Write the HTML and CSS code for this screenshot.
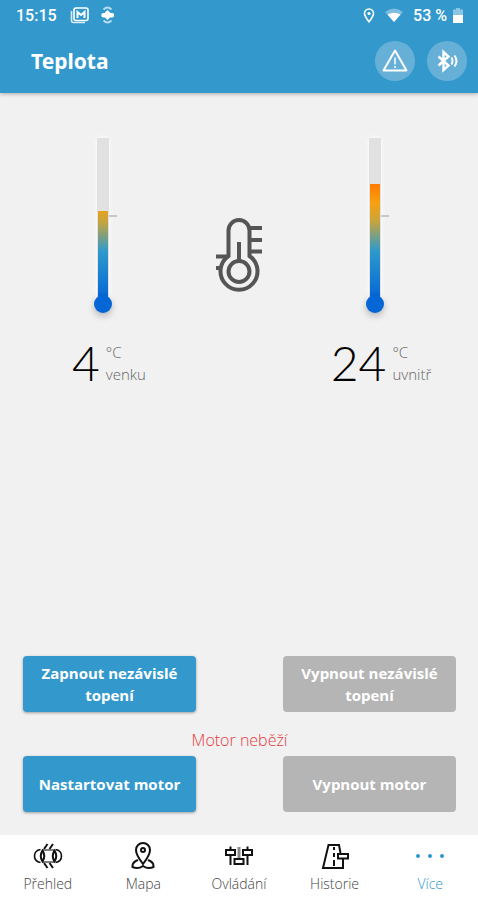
FILE: index.html
```html
<!DOCTYPE html>
<html lang="cs">
<head>
<meta charset="UTF-8">
<meta name="viewport" content="width=device-width, initial-scale=1.0">
<title>Teplota</title>
<link rel="stylesheet" href="styles.css">
</head>
<body>

<header class="header">
  <div class="status">
    <span class="clock">15:15</span>
    <svg class="status-mail" width="19" height="17" viewBox="0 0 19 17">
      <path d="M1.500 4v9.500q0 2 2 2H15" fill="none" stroke="#d9ecf7" stroke-width="1.600"/>
      <rect x="4" y="1" width="14" height="12.500" rx="2" fill="none" stroke="#fff" stroke-width="1.600"/>
      <path d="M7.500 11V5l3.500 3 3.500-3v6" fill="none" stroke="#fff" stroke-width="2"/>
    </svg>
    <svg class="status-sync" width="13" height="18" viewBox="0 0 13 18">
      <path d="M2.500 3.500Q6.500-.5 10.500 3.500M2.500 14.500Q6.500 18.500 10.500 14.500" fill="none" stroke="#b9dcf0" stroke-width="1.800"/>
      <path d="M6.500 4l3 3H11a2 2 0 0 1 0 4.500H9l-2.500 2.500L4 11.500H2.500A2 2 0 0 1 2.500 7h1z" fill="#fff"/>
    </svg>
    <span class="status-space"></span>
    <svg class="status-pin" width="12" height="15" viewBox="0 0 12 15">
      <path d="M6 13.800C3 10 1.500 8 1.500 5.500a4.500 4.500 0 0 1 9 0C10.500 8 9 10 6 13.800z" fill="none" stroke="#fff" stroke-width="1.600"/>
      <circle cx="6" cy="5.500" r="1.600" fill="#fff"/>
    </svg>
    <svg class="status-wifi" width="18" height="14" viewBox="0 0 18 14">
      <path d="M0 4Q9-3 18 4L9 14z" fill="#7dbde0"/>
      <path d="M2.500 6.500Q9 3 15.500 6.500L9 14z" fill="#fff"/>
    </svg>
    <span class="battery-text">53 %</span>
    <svg class="status-battery" width="10" height="15" viewBox="0 0 10 15">
      <path d="M3 0h4v1.500h3V7H0V1.500h3z" fill="#8cc5e4"/>
      <path d="M0 7h10v8H0z" fill="#fff"/>
    </svg>
  </div>
  <div class="title-bar">
    <h1>Teplota</h1>
    <button class="round" aria-label="Varování">
      <svg width="28" height="26" viewBox="0 0 28 26" fill="none" stroke="#fff">
        <path d="M14 2.500L25.500 22.500H2.500z" stroke-width="2" stroke-linejoin="round"/>
        <path d="M14 9.500v7M14 18v2" stroke-width="1.500"/>
      </svg>
    </button>
    <button class="round" aria-label="Bluetooth">
      <svg width="24" height="24" viewBox="0 0 24 24" fill="none" stroke="#fff">
        <path d="M3.500 7.500l10 9-5 4.500V3l5 4.500-10 9" stroke-width="2.400"/>
        <path d="M16.500 8.500q2 3.500 0 7M19.500 6.500q4 5.500 0 11" stroke-width="2"/>
      </svg>
    </button>
  </div>
</header>

<main class="content">
  <section class="gauges">
    <div class="gauge">
      <div class="thermo">
        <div class="tube"><div class="level" style="height:56%"></div></div>
        <div class="bulb"></div>
        <div class="tick"></div>
      </div>
      <div class="reading">
        <span class="value">4</span>
        <span class="unit">°C<br>venku</span>
      </div>
    </div>

    <svg class="thermo-icon" width="50" height="78" viewBox="0 0 50 78" fill="none" stroke="#555" stroke-width="4">
      <path d="M14.500 39V13.500a10.500 10.500 0 0 1 21 0V39a18.500 18.500 0 1 1-21 0z"/>
      <circle cx="25" cy="54.500" r="10.500"/>
      <path d="M25 25v19M36 11h12M36 23h12M36 34.500h12M2 39.500h12M2 51h6"/>
    </svg>

    <div class="gauge">
      <div class="thermo">
        <div class="tube"><div class="level" style="height:72%"></div></div>
        <div class="bulb"></div>
        <div class="tick"></div>
      </div>
      <div class="reading">
        <span class="value">24</span>
        <span class="unit">°C<br>uvnitř</span>
      </div>
    </div>
  </section>

  <section class="controls">
    <button class="btn">Zapnout nezávislé topení</button>
    <button class="btn" disabled>Vypnout nezávislé topení</button>
    <p class="message">Motor neběží</p>
    <button class="btn">Nastartovat motor</button>
    <button class="btn" disabled>Vypnout motor</button>
  </section>
</main>

<nav class="tabs">
  <a href="#prehled">
    <svg width="30" height="28" viewBox="0 0 30 28" fill="none" stroke="#111" stroke-width="1.600">
      <path d="M9 8h12M9 20h12" stroke="#555"/>
      <path d="M7.500 7.500Q1.500 8.500 1.500 14t6 6.500M22.500 7.500q6 1 6 6.500t-6 6.500"/>
      <path d="M9.500 8.500q-3.500 5.500 0 11 3.500-5.500 0-11zM21.500 8.500q-3.500 5.500 0 11 3.500-5.500 0-11z" stroke-width="2"/>
      <path d="M11 7l3.500-5M16.500 7L20 2M11 21l3.500 5M16.500 21l3.500 5" stroke-width="2"/>
    </svg>
    Přehled
  </a>
  <a href="#mapa">
    <svg width="30" height="28" viewBox="0 0 30 28" fill="none" stroke="#111" stroke-width="2">
      <path d="M15 22Q8 13 8 8a7 7 0 0 1 14 0q0 5-7 14z"/>
      <circle cx="15" cy="8" r="2"/>
      <path d="M10 18q-6 2-5.500 7 5.500 2.500 10.500-1 5 3.500 10.500 1 .5-5-5.500-7"/>
    </svg>
    Mapa
  </a>
  <a href="#ovladani">
    <svg width="30" height="28" viewBox="0 0 30 28" fill="none" stroke="#111" stroke-width="2">
      <path d="M15 5v12" stroke="#888" stroke-width="3"/>
      <path d="M2 8h9v5H2zM19 8h9v5h-9zM6.500 4.500V8M6.500 13v10M23.500 4.500V8M23.500 13v10M10.500 17h9v5h-9z"/>
    </svg>
    Ovládání
  </a>
  <a href="#historie">
    <svg width="30" height="28" viewBox="0 0 30 28" fill="none" stroke="#111" stroke-width="2">
      <path d="M20.500 11L19 3H8.500L3 26h20v-9"/>
      <path d="M14 5v3M14 11v4M14 18v6"/>
      <path d="M18 12h10v4.500H18z"/>
    </svg>
    Historie
  </a>
  <a href="#vice" class="active">
    <svg width="30" height="28" viewBox="0 0 30 28" fill="#2f97cd">
      <circle cx="3" cy="14" r="2"/><circle cx="15" cy="14" r="2"/><circle cx="27" cy="14" r="2"/>
    </svg>
    Více
  </a>
</nav>

</body>
</html>
```

FILE: styles.css
```css
* {
  box-sizing: border-box;
}

body {
  margin: 0;
  min-height: 100vh;
  display: flex;
  flex-direction: column;
  background: #f1f1f1;
  font-family: "Open Sans", sans-serif;
}

.header {
  background: #3399cd;
  color: white;
  box-shadow: 0 1px 4px rgba(0, 0, 0, 0.3);
}

.status {
  display: flex;
  align-items: center;
  height: 30px;
  padding: 0 15px 0 16px;
  font-family: Roboto, sans-serif;
  font-size: 16px;
  font-weight: 500;
}

.status-mail {
  margin-left: 13px;
}

.status-sync {
  margin-left: 12px;
}

.status-space {
  flex: 1;
}

.status-wifi {
  margin-left: 10px;
}

.battery-text {
  margin-left: 10px;
}

.status-battery {
  margin-left: 6px;
}

.title-bar {
  display: flex;
  align-items: center;
  gap: 12px;
  height: 63px;
  padding: 0 11px 2px 31px;
}

h1 {
  flex: 1;
  margin: 0;
  font-family: "Noto Sans", sans-serif;
  font-size: 21px;
  line-height: 28px;
}

.round {
  display: flex;
  align-items: center;
  justify-content: center;
  width: 40px;
  height: 40px;
  padding: 0;
  border: none;
  border-radius: 50%;
  background: #66b0d8;
  cursor: pointer;
}

.content {
  flex: 1;
  display: flex;
  flex-direction: column;
  justify-content: space-between;
}

.gauges {
  display: grid;
  grid-template-columns: 1fr 66px 1fr;
  justify-items: center;
  padding-top: 45px;
}

.gauge {
  display: flex;
  flex-direction: column;
  align-items: center;
}

.thermo {
  position: relative;
  display: flex;
  flex-direction: column;
  align-items: center;
}

.tube {
  display: flex;
  flex-direction: column;
  justify-content: flex-end;
  align-items: center;
  width: 12px;
  height: 165px;
  background: #e1e1e1;
  box-shadow: 0 0 5px white;
}

/* gradient is anchored to the bottom so both levels share one scale */
.level {
  width: 10px;
  background: linear-gradient(#ff7800, #f8a010 20px, #c9a53b 38px, #2e9acb 68px, #0566d6 115px) bottom / 100% 120px no-repeat;
}

.bulb {
  z-index: 1;
  width: 18px;
  height: 18px;
  margin-top: -8px;
  border-radius: 50%;
  background: #0566d6;
  box-shadow: 0 3px 7px rgba(0, 0, 0, 0.25);
}

.tick {
  position: absolute;
  top: 77px;
  left: 15px;
  width: 8px;
  height: 2px;
  background: #c8c8c8;
}

.reading {
  display: flex;
  align-items: center;
  gap: 6px;
  margin-top: 26px;
  padding-left: 12px;
}

.value {
  font-family: Lato, sans-serif;
  font-size: 48px;
  font-weight: 300;
  line-height: 48px;
}

.unit {
  color: #666;
  font-size: 15px;
  font-weight: 300;
  line-height: 22px;
}

.thermo-icon {
  margin-top: 79px;
}

.controls {
  display: grid;
  grid-template-columns: 173px 173px;
  justify-content: space-between;
  padding: 0 22px 23px 23px;
}

.btn {
  height: 56px;
  padding: 0 10px;
  border: none;
  border-radius: 4px;
  background: #3399cd;
  box-shadow: 0 1px 3px rgba(0, 0, 0, 0.35);
  color: white;
  font-family: "Open Sans", sans-serif;
  font-size: 15px;
  font-weight: bold;
  line-height: 22px;
  cursor: pointer;
}

.btn:disabled {
  background: #b5b5b5;
  box-shadow: none;
  cursor: default;
}

.message {
  grid-column: 1 / 3;
  margin: 17px 0 5px;
  color: #e8383d;
  font-size: 16px;
  font-weight: 300;
  line-height: 22px;
  text-align: center;
}

.tabs {
  display: grid;
  grid-template-columns: repeat(5, 1fr);
  height: 65px;
  background: white;
}

.tabs a {
  display: flex;
  flex-direction: column;
  align-items: center;
  padding-top: 7px;
  color: #444;
  font-size: 14px;
  font-weight: 300;
  line-height: 28px;
  text-decoration: none;
}

.tabs .active {
  color: #2f97cd;
}
```
